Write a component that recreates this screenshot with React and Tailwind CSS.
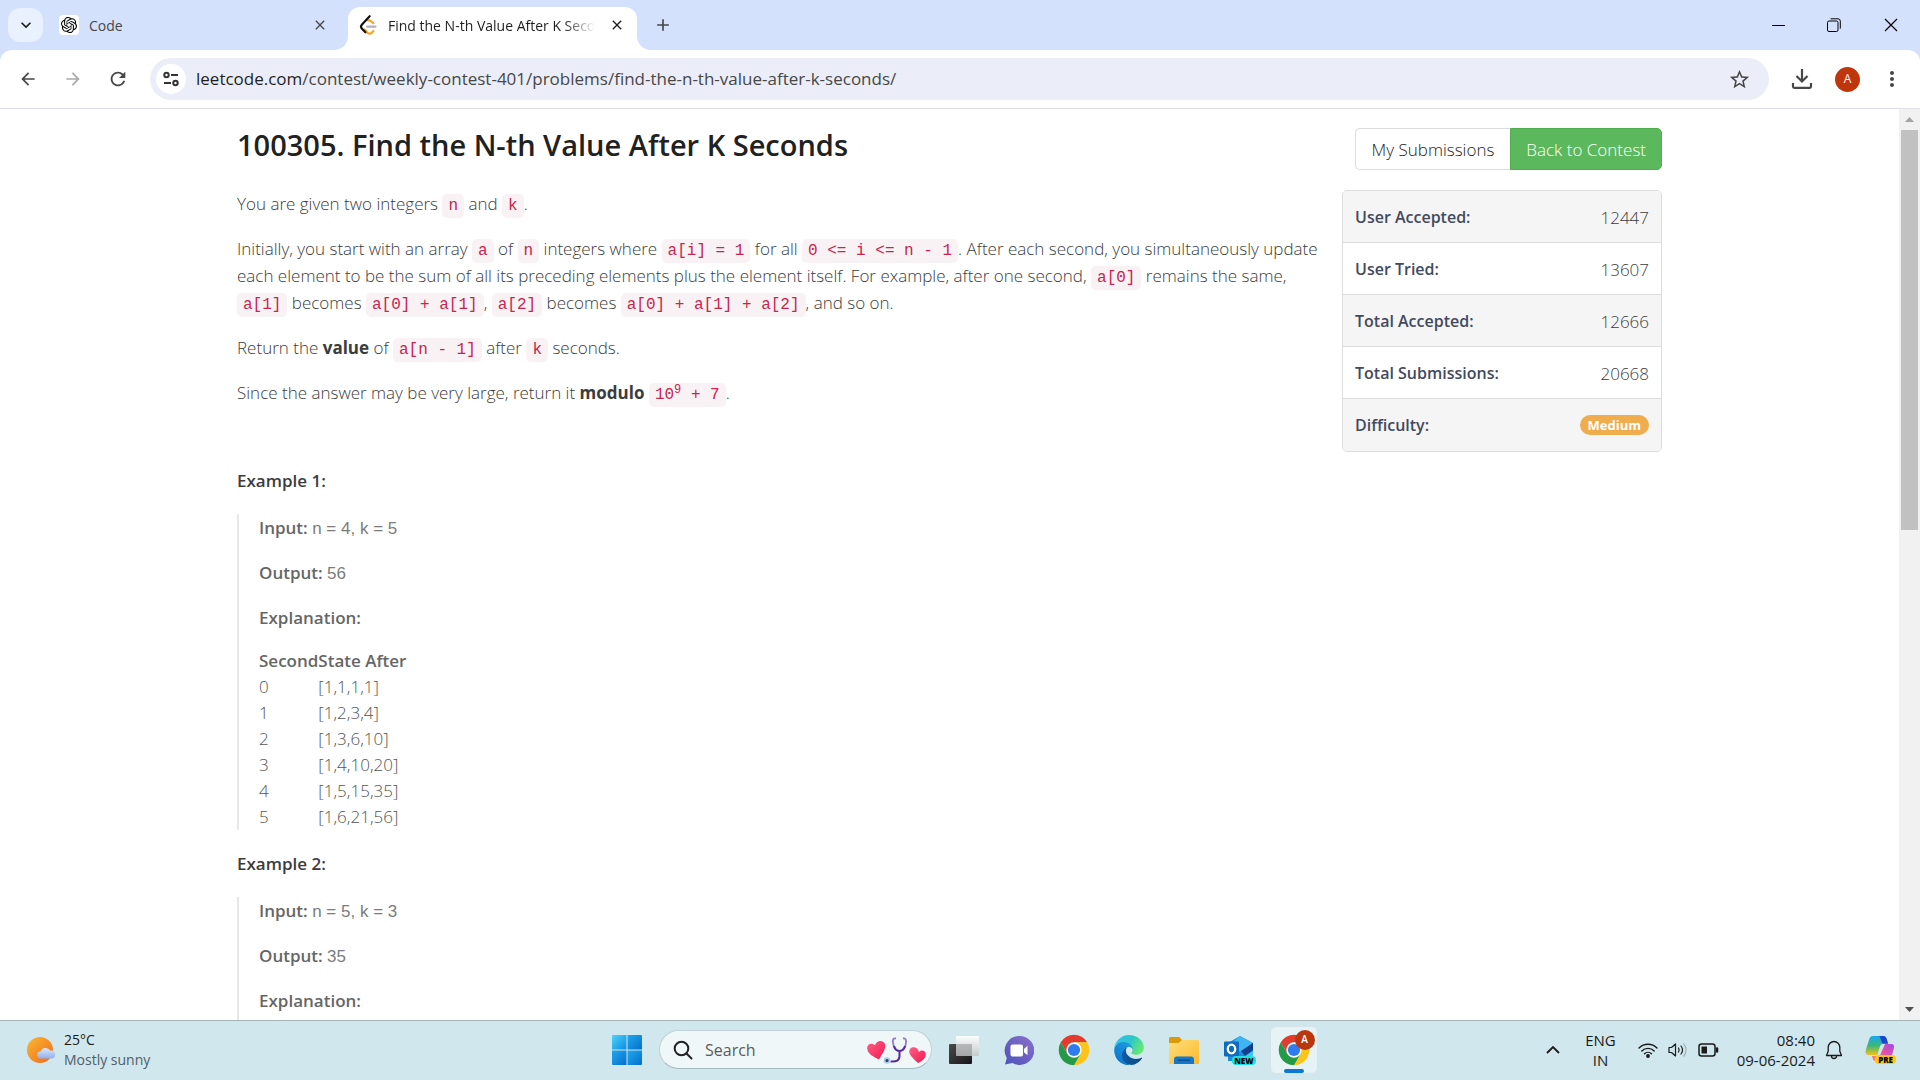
import React from "react";
import {
  MdArrowBack,
  MdArrowForward,
  MdRefresh,
  MdStarBorder,
  MdMoreVert,
  MdClose,
  MdAdd,
  MdKeyboardArrowDown,
} from "react-icons/md";
import { SiOpenai } from "react-icons/si";

/* ---------- icons ---------- */

function LeetCodeIcon() {
  return (
    <svg className="size-5 shrink-0" viewBox="0 0 24 24" fill="none" strokeLinecap="round" strokeWidth="2.6">
      <path d="M8 17.5l3.4 3.8a3.6 3.6 0 0 0 5.1 0l2-2.1" stroke="#ffa116" />
      <path d="M12 6.500l2.200-.2 4.200 3.600" stroke="#ffa116" />
      <path d="M14 1.500L4.800 11.300a3.800 3.800 0 0 0 0 5.200l4 4.200" stroke="#111" />
      <path d="M11 14h10" stroke="#b3b3b3" />
    </svg>
  );
}

function TuneIcon() {
  return (
    <svg width="18" height="18" viewBox="0 0 18 18" fill="none" stroke="#333" strokeWidth="2">
      <circle cx="4.500" cy="5" r="2.200" />
      <path d="M9 5h7M2 13h7" />
      <circle cx="13.500" cy="13" r="2.200" />
    </svg>
  );
}

function DownloadIcon() {
  return (
    <svg width="22" height="22" viewBox="0 0 22 22" fill="none" stroke="#474747" strokeWidth="2.200">
      <path d="M11 1v12M5.500 8l5.500 5.500L16.500 8M2 15v3.500c0 .8.500 1.300 1.300 1.300h15.400c.8 0 1.300-.5 1.300-1.300V15" />
    </svg>
  );
}

function WindowsIcon() {
  return (
    <svg width="30" height="30" viewBox="0 0 30 30">
      <defs>
        <linearGradient id="win" x1="0" y1="0" x2="1" y2="1" gradientUnits="objectBoundingBox">
          <stop offset="0" stopColor="#4fd3fb" />
          <stop offset="1" stopColor="#0d8be0" />
        </linearGradient>
        <linearGradient id="win2" x1="0" y1="0" x2="1" y2="1">
          <stop offset="0" stopColor="#22a7ee" />
          <stop offset="1" stopColor="#0470cc" />
        </linearGradient>
      </defs>
      <path d="M1 0h13.500v14.500H0V1a1 1 0 0 1 1-1z" fill="url(#win)" />
      <path d="M15.500 0H29a1 1 0 0 1 1 1v13.500H15.500z" fill="url(#win2)" />
      <path d="M0 15.500h14.500V30H1a1 1 0 0 1-1-1z" fill="url(#win2)" />
      <path d="M15.500 15.500H30V29a1 1 0 0 1-1 1H15.500z" fill="url(#win2)" />
    </svg>
  );
}

function StethoscopeIcon() {
  return (
    <svg width="60" height="28" viewBox="0 0 60 28" fill="none">
      <defs>
        <linearGradient id="heart" x1="0" y1="0" x2="1" y2="1">
          <stop offset="0" stopColor="#ff5f86" />
          <stop offset="1" stopColor="#f01a52" />
        </linearGradient>
      </defs>
      <path
        d="M13 23.500C8 21 1.500 18 1.200 12.500.9 8.300 5.500 6 9 9.300 10.500 4.500 16 3.500 18.500 7c2.800 4.500-2.500 11-5.500 16.500z"
        fill="url(#heart)"
      />
      <path
        d="M52 27c4-2 8-4.500 7.800-9-.2-3.200-4-4.800-6.800-2-1.200-4.300-5.600-6.200-8.800-3.200-3.500 4.200 2.800 9.700 7.800 14.200z"
        fill="url(#heart)"
      />
      <path d="M30 2.500c-3-.5-3.500 1-3 4 .5 5 2 8.500 6.500 8.500s6-3.500 6.500-8.500c.3-3-.5-4.500-3-4" stroke="#8d7bc4" strokeWidth="1.800" />
      <path d="M28 10c1 3.500 2.500 5 5.500 5s4.500-1.500 5.500-5M33.500 15v5c0 4.500-3 6-9 5.500" stroke="#5a2aa0" strokeWidth="2" />
      <circle cx="21" cy="24.500" r="3.300" fill="#a9c8ea" />
      <circle cx="21" cy="24.500" r="1.500" fill="#33415c" />
    </svg>
  );
}

function TaskViewIcon() {
  return (
    <svg width="32" height="32" viewBox="0 0 32 32">
      <defs>
        <linearGradient id="tvDark" x1="0" y1="0" x2="1" y2="1">
          <stop offset="0" stopColor="#4b4b4b" />
          <stop offset="1" stopColor="#161616" />
        </linearGradient>
        <linearGradient id="tvLight" x1="0" y1="0" x2="0" y2="1">
          <stop offset="0" stopColor="#ffffff" />
          <stop offset="1" stopColor="#c4c8c9" />
        </linearGradient>
      </defs>
      <rect x="1" y="10" width="23" height="20" rx="1" fill="url(#tvDark)" />
      <rect x="8" y="2" width="23" height="20" rx="1" fill="url(#tvLight)" opacity=".92" />
      <path d="M8 10h16v12H8z" fill="#8d8d8d" opacity=".45" />
    </svg>
  );
}

function ChatIcon() {
  return (
    <svg width="30" height="30" viewBox="0 0 30 30">
      <defs>
        <linearGradient id="chat" x1="1" y1="0" x2="0" y2="1">
          <stop offset="0" stopColor="#8d70c9" />
          <stop offset="1" stopColor="#4b53bc" />
        </linearGradient>
      </defs>
      <path d="M15 1a14.500 14.500 0 1 1-6.500 27L1 29.500l1.800-6.500A14.500 14.500 0 0 1 15 1z" fill="url(#chat)" />
      <rect x="6.500" y="9.500" width="12.500" height="12" rx="2" fill="#fff" />
      <path d="M20 14l3.500-3.200v9.500L20 17.200z" fill="#fff" />
    </svg>
  );
}

function ChromeIcon() {
  return (
    <svg width="32" height="32" viewBox="1 1 46 46">
      <path d="M4.950 13A22 22 0 0 1 43.050 13H24v11l-9.530 5.500z" fill="#e33b2e" />
      <path d="M43.050 13A22 22 0 0 1 24 46l9.530-16.500L24 24V13z" fill="#fcc419" />
      <path d="M24 46A22 22 0 0 1 4.950 13l9.520 16.500L24 24l9.530 5.500z" fill="#249a48" />
      <circle cx="24" cy="24" r="11" fill="#fff" />
      <circle cx="24" cy="24" r="8.800" fill="#2f7cf0" />
    </svg>
  );
}

function EdgeIcon() {
  return (
    <svg width="30" height="30" viewBox="0 0 256 259">
      <defs>
        <linearGradient id="edgeA" x1="0" y1="0" x2="1" y2="0">
          <stop offset="0" stopColor="#0b5aa8" />
          <stop offset="1" stopColor="#0c4a80" />
        </linearGradient>
        <linearGradient id="edgeB" x1=".8" y1="0" x2=".2" y2="1">
          <stop offset="0" stopColor="#1b9de2" />
          <stop offset="1" stopColor="#0b72cc" />
        </linearGradient>
        <linearGradient id="edgeC" x1="0" y1=".2" x2="1" y2=".6">
          <stop offset="0" stopColor="#35c1f1" />
          <stop offset=".5" stopColor="#2cc5c9" />
          <stop offset="1" stopColor="#66eb6e" />
        </linearGradient>
      </defs>
      <path
        fill="url(#edgeA)"
        d="M235.680 195.460a93.730 93.730 0 0 1-10.540 4.710 101.870 101.870 0 0 1-35.900 6.460c-47.320 0-88.540-32.550-88.540-74.320A31.480 31.480 0 0 1 117.130 105c-42.800 1.800-53.800 46.400-53.800 72.530 0 73.880 68.090 81.370 82.760 81.370 7.910 0 19.840-2.300 27-4.560l1.310-.44a128.340 128.340 0 0 0 66.600-52.800 4 4 0 0 0-5.320-5.640z"
      />
      <path
        fill="url(#edgeB)"
        d="M105.730 246.420A79.200 79.200 0 0 1 83 225.080a80.720 80.720 0 0 1 29.460-120c3.120-1.470 8.450-4.130 15.540-4a32.350 32.350 0 0 1 25.690 13 31.880 31.880 0 0 1 6.360 18.660c0-.21 24.460-79.600-80-79.600-43.900 0-80 41.660-80 78.210a130.150 130.150 0 0 0 12.110 56 128 128 0 0 0 156.380 67.110 75.550 75.550 0 0 1-62.780-8z"
      />
      <path
        fill="url(#edgeC)"
        d="M152.330 148.860c-.81 1.050-3.300 2.500-3.300 5.660 0 2.610 1.700 5.120 4.720 7.230 14.380 10 41.490 8.680 41.560 8.680a59.560 59.560 0 0 0 30.270-8.350A61.380 61.380 0 0 0 256 109.200c.26-22.410-8-37.310-11.340-43.910C223.460 23.840 177.720 0 128 0A128 128 0 0 0 0 126.200c.48-36.540 36.800-66.050 80-66.050 3.500 0 23.460.34 42 10.070 16.340 8.580 24.900 18.940 30.850 29.210 6.180 10.670 7.280 24.150 7.280 29.520s-2.740 13.330-7.800 19.910z"
      />
    </svg>
  );
}

function FolderIcon() {
  return (
    <svg width="32" height="30" viewBox="0 0 32 30">
      <defs>
        <linearGradient id="folder" x1="0" y1="0" x2="1" y2="1">
          <stop offset="0" stopColor="#ffdf7c" />
          <stop offset="1" stopColor="#fbb92a" />
        </linearGradient>
      </defs>
      <path d="M1 3.500C1 2.500 1.700 2 2.500 2h8.700l3.300 3.500L11 9H1z" fill="#dc9a0b" />
      <path d="M1 8h9.500l3.500-3h15.500c1 0 1.500.6 1.500 1.500V28c0 .6-.4 1-1 1H2c-.6 0-1-.4-1-1z" fill="url(#folder)" />
      <path d="M6 29v-4.500c0-2 1-3 3-3h14c2 0 3 1 3 3V29z" fill="#1577c9" />
      <path d="M10 25.300h12" stroke="#0b4f94" strokeWidth="1.500" />
    </svg>
  );
}

function OutlookIcon() {
  return (
    <svg width="32" height="32" viewBox="0 0 32 32">
      <path d="M5 9L17 2l13 7v18H5z" fill="#1c8de0" />
      <path d="M17 2l13 7-13 9L9 9z" fill="#3fb4f3" />
      <path d="M18 17L30 9v7l-8 6z" fill="#123f8c" />
      <path d="M12 29l18-12v12z" fill="#42c4f5" />
      <rect x="1" y="7.500" width="15" height="15" rx="1" fill="#0f6cbd" />
      <ellipse cx="8.500" cy="15" rx="3.700" ry="4.300" fill="none" stroke="#fff" strokeWidth="2.300" />
    </svg>
  );
}

function WeatherIcon() {
  return (
    <svg width="30" height="28" viewBox="0 0 30 28">
      <defs>
        <linearGradient id="sun" x1="0" y1="0" x2="1" y2="1">
          <stop offset="0" stopColor="#f9b92f" />
          <stop offset="1" stopColor="#f0681d" />
        </linearGradient>
        <linearGradient id="cloud" x1="0" y1="0" x2="0" y2="1">
          <stop offset="0" stopColor="#dbe7fb" />
          <stop offset="1" stopColor="#8fb0ee" />
        </linearGradient>
      </defs>
      <circle cx="14" cy="14" r="13" fill="url(#sun)" />
      <path d="M15 22.500a3.500 3.500 0 0 1-.5-7 5.500 5.500 0 0 1 9.800-1 4 4 0 0 1 1.500 8z" fill="url(#cloud)" />
    </svg>
  );
}

function WifiIcon() {
  return (
    <svg width="20" height="16" viewBox="0 0 20 16" fill="none" stroke="#1b1b1b" strokeWidth="1.400" strokeLinecap="round">
      <path d="M1 6a12.800 12.800 0 0 1 18 0M3.800 9a8.700 8.700 0 0 1 12.400 0M6.500 11.800a5 5 0 0 1 7 0" />
      <circle cx="10" cy="14" r="1.200" fill="#1b1b1b" />
    </svg>
  );
}

function SpeakerIcon() {
  return (
    <svg width="20" height="16" viewBox="0 0 20 16" fill="none" stroke="#1b1b1b" strokeWidth="1.200" strokeLinecap="round" strokeLinejoin="round">
      <path d="M1 5.500h2.500L7.500 2v12l-4-3.500H1z" />
      <path d="M10.500 6a3.500 3.500 0 0 1 0 4M13 4a6.500 6.500 0 0 1 0 8" />
      <path d="M15.700 1.800a9.500 9.500 0 0 1 0 12.400" stroke="#9fb2b7" />
    </svg>
  );
}

function BatteryIcon() {
  return (
    <svg width="21" height="14" viewBox="0 0 21 14" fill="none" stroke="#1b1b1b" strokeWidth="1.500">
      <rect x="1" y="1" width="16" height="12" rx="2.500" />
      <path d="M19 5.500v3" strokeWidth="2.500" strokeLinecap="round" />
      <path d="M3.500 3.500H9v7H3.500z" fill="#1b1b1b" stroke="none" />
    </svg>
  );
}

function BellIcon() {
  return (
    <svg width="18" height="20" viewBox="0 0 18 20" fill="none" stroke="#1b1b1b" strokeWidth="1.300" strokeLinejoin="round">
      <path d="M9 1.500a5.800 5.800 0 0 0-5.800 5.800v4L1.500 15.500h15l-1.700-4.200v-4A5.800 5.800 0 0 0 9 1.500z" />
      <path d="M6.500 16a2.500 2.500 0 0 0 5 0" />
    </svg>
  );
}

function CopilotIcon() {
  return (
    <svg width="30" height="28" viewBox="0 0 30 28">
      <defs>
        <linearGradient id="copA" x1="0" y1="0" x2="0" y2="1">
          <stop offset="0" stopColor="#1aa8f0" />
          <stop offset=".5" stopColor="#38b87c" />
          <stop offset="1" stopColor="#f2c21a" />
        </linearGradient>
        <linearGradient id="copB" x1="0" y1="1" x2="1" y2="0">
          <stop offset="0" stopColor="#ff8a5c" />
          <stop offset=".5" stopColor="#ef4f9d" />
          <stop offset="1" stopColor="#9b4df0" />
        </linearGradient>
      </defs>
      <path d="M8 0h10c2.500 0 3.200 1.500 4 4l1.200 4h-5c-2 0-2.700 1-3.400 3l-2.500 8H4c-3 0-4-2-3.200-5L4 4c.7-2.500 1.700-4 4-4z" fill="url(#copA)" />
      <path d="M14 0h4c2.500 0 3.200 1.500 4 4l1 3.500h-5C16 7 16 1 14 0z" fill="#1f45cf" />
      <path d="M20 8h6c3 0 3.500 2 2.700 5l-2 7c-.9 3.500-2 5-5 5H11c-2.500 0-3.500-2-4-5h6c1.500 0 2.500-1 3-3z" fill="url(#copB)" />
    </svg>
  );
}

/* ---------- browser frame ---------- */

function TabStrip() {
  return (
    <div className="flex h-[50px] items-stretch bg-[#d3e1fd] text-[14px] text-[#474747]">
      <button aria-label="Search tabs" className="my-2 ml-2 grid w-[35px] place-items-center rounded-xl bg-[#e9f0fe]">
        <MdKeyboardArrowDown className="size-5 text-[#1b1b1b]" />
      </button>
      <div className="ml-4 flex w-[275px] items-center pr-1">
        <span className="grid size-5 place-items-center rounded-sm bg-white">
          <SiOpenai className="size-4 text-black" />
        </span>
        <span className="ml-[10px] flex-1">Code</span>
        <button aria-label="Close tab" className="grid size-5 place-items-center">
          <MdClose className="size-4" />
        </button>
      </div>
      <div className="flex w-[317px]">
        <div className="w-[14px] self-end bg-white">
          <div className="h-[14px] rounded-br-[14px] bg-[#d3e1fd]" />
        </div>
        <div className="mt-[7px] flex flex-1 items-center rounded-t-xl bg-white pr-[10px] pl-[10px] pb-[7px] text-[#1f1f1f]">
          <LeetCodeIcon />
          <span className="ml-[10px] w-0 flex-1 overflow-hidden whitespace-nowrap [mask-image:linear-gradient(to_right,black_85%,transparent)]">
            Find the N-th Value After K Seconds
          </span>
          <button aria-label="Close tab" className="ml-3 grid size-5 place-items-center">
            <MdClose className="size-4" />
          </button>
        </div>
        <div className="w-[14px] self-end bg-white">
          <div className="h-[14px] rounded-bl-[14px] bg-[#d3e1fd]" />
        </div>
      </div>
      <button aria-label="New tab" className="grid w-6 place-items-center">
        <MdAdd className="size-5" />
      </button>
      <div className="ml-auto flex text-black">
        <button aria-label="Minimize" className="grid w-14 place-items-center">
          <svg width="13" height="13" viewBox="0 0 13 13" stroke="currentColor"><path d="M0 6.500h13" /></svg>
        </button>
        <button aria-label="Restore" className="grid w-14 place-items-center">
          <svg width="14" height="14" viewBox="0 0 14 14" fill="none" stroke="currentColor">
            <rect x=".5" y="3" width="10.500" height="10.500" rx="1.500" />
            <path d="M3.500 .8h7.500a2.300 2.300 0 0 1 2.300 2.300v7.500" />
          </svg>
        </button>
        <button aria-label="Close" className="grid w-[58px] place-items-center">
          <svg width="14" height="14" viewBox="0 0 14 14" stroke="currentColor" strokeWidth="1.200"><path d="M1 1l12 12M13 1L1 13" /></svg>
        </button>
      </div>
    </div>
  );
}

function Toolbar() {
  return (
    <div className="bg-[#d3e1fd]">
      <div className="flex h-[59px] items-center rounded-t-xl border-b border-[#dfe1e5] bg-white pl-[5px] text-[#474747]">
        <button aria-label="Back" className="grid w-[45px] place-items-center"><MdArrowBack className="size-5" /></button>
        <button aria-label="Forward" className="grid w-[45px] place-items-center text-[#a9a9a9]"><MdArrowForward className="size-5" /></button>
        <button aria-label="Reload" className="grid w-[45px] place-items-center"><MdRefresh className="size-[22px]" /></button>
        <div className="ml-[10px] flex h-[42px] flex-1 items-center rounded-full bg-[#ebeef8] pr-[18px] pl-[6px]">
          <button aria-label="Site information" className="grid size-[30px] place-items-center rounded-full bg-white"><TuneIcon /></button>
          <div className="ml-[10px] flex-1 text-[17px] text-[#474747]">
            <span className="text-[#1f1f1f]">leetcode.com</span>/contest/weekly-contest-401/problems/find-the-n-th-value-after-k-seconds/
          </div>
          <button aria-label="Bookmark"><MdStarBorder className="size-[23px]" /></button>
        </div>
        <button aria-label="Downloads" className="ml-[22px]"><DownloadIcon /></button>
        <button aria-label="Profile" className="ml-[22px] grid size-[25px] place-items-center rounded-full bg-[#bf360c] text-[12px] text-white">A</button>
        <button aria-label="Menu" className="mr-4 ml-5"><MdMoreVert className="size-6" /></button>
      </div>
    </div>
  );
}

/* ---------- page ---------- */

function Code({ children }) {
  return (
    <code className="rounded-[5px] bg-[#f9f2f4] px-[6px] py-[3px] font-['Liberation_Mono',monospace] text-[16px] leading-4 font-normal whitespace-nowrap text-[#c7254e]">
      {children}
    </code>
  );
}

function Example({ title, input, output, rows }) {
  return (
    <section>
      <p className="mb-5 font-semibold">{title}</p>
      <blockquote className="border-l-2 border-[#e8e8e8] pl-5 text-[#666]">
        <p className="mb-[18px]"><strong className="font-semibold">Input:</strong> <span className="font-['Liberation_Sans',sans-serif] leading-4 text-[#7c7c7c]">{input}</span></p>
        <p className="mb-[18px]"><strong className="font-semibold">Output:</strong> <span className="font-['Liberation_Sans',sans-serif] leading-4 text-[#7c7c7c]">{output}</span></p>
        <p className="mb-4 font-semibold">Explanation:</p>
        <table className="text-left leading-[26px] text-[#555]">
          <thead className="leading-[27px] text-[#666]">
            <tr>
              <th className="p-0 font-semibold">Second</th>
              <th className="p-0 font-semibold">State After</th>
            </tr>
          </thead>
          <tbody>
            {rows.map((state, i) => (
              <tr key={i}>
                <td className="p-0">{i}</td>
                <td className="p-0">{state}</td>
              </tr>
            ))}
          </tbody>
        </table>
      </blockquote>
    </section>
  );
}

const STATS = [
  ["User Accepted:", "12447"],
  ["User Tried:", "13607"],
  ["Total Accepted:", "12666"],
  ["Total Submissions:", "20668"],
];

function Sidebar() {
  return (
    <aside className="w-[320px] shrink-0 pt-[19px]">
      <div className="mb-5 flex justify-end">
        <a href="#submissions" className="flex h-[42px] items-center rounded-l-[5px] border border-r-0 border-[#ddd] px-4 pt-px text-[#222]">My Submissions</a>
        <a href="#contest" className="flex h-[42px] items-center rounded-r-[5px] border border-[#4cae4c] bg-[#5cb85c] px-[15px] pt-px text-white">Back to Contest</a>
      </div>
      <dl className="divide-y divide-[#ddd] overflow-hidden rounded-[5px] border border-[#ddd]">
        {STATS.map(([label, value]) => (
          <div key={label} className="flex h-[52px] items-center justify-between px-3 pt-px odd:bg-[#f5f5f5]">
            <dt className="text-[16px] font-semibold text-[#424a5e]">{label}</dt>
            <dd>{value}</dd>
          </div>
        ))}
        <div className="flex h-[52px] items-center justify-between bg-[#f5f5f5] px-3">
          <dt className="text-[16px] font-semibold text-[#424a5e]">Difficulty:</dt>
          <dd className="rounded-full bg-[#f0ad4e] px-2 text-[13px] leading-5 font-bold text-white">Medium</dd>
        </div>
      </dl>
    </aside>
  );
}

function Problem() {
  return (
    <main className="flex min-h-0 flex-1">
      <div className="min-w-0 flex-1 overflow-hidden bg-white">
        <div className="mx-auto flex max-w-[1425px] gap-2 text-[17px] leading-[27px] font-light text-[#3c3c3c]">
          <article className="min-w-0 flex-1 pt-4">
            <h1 className="mb-[25px] text-[29px] leading-10 font-semibold text-[#212121]">100305. Find the N-th Value After K Seconds</h1>
            <div className="flex flex-col gap-[18px]">
              <p>You are given two integers <Code>n</Code> and <Code>k</Code>.</p>
              <p>
                Initially, you start with an array <Code>a</Code> of <Code>n</Code> integers where <Code>a[i] = 1</Code> for all{" "}
                <Code>0 &lt;= i &lt;= n - 1</Code>. After each second, you simultaneously update each element to be the sum of all its
                preceding elements plus the element itself. For example, after one second, <Code>a[0]</Code> remains the same,{" "}
                <Code>a[1]</Code> becomes <Code>a[0] + a[1]</Code>, <Code>a[2]</Code> becomes <Code>a[0] + a[1] + a[2]</Code>, and so on.
              </p>
              <p>Return the <strong className="font-bold">value</strong> of <Code>a[n - 1]</Code> after <Code>k</Code> seconds.</p>
              <p>
                Since the answer may be very large, return it <strong className="font-bold">modulo</strong>{" "}
                <Code>10<sup className="text-[12px]">9</sup> + 7</Code>.
              </p>
            </div>
            <div className="mt-[61px] flex flex-col gap-5">
              <Example
                title="Example 1:"
                input="n = 4, k = 5"
                output="56"
                rows={["[1,1,1,1]", "[1,2,3,4]", "[1,3,6,10]", "[1,4,10,20]", "[1,5,15,35]", "[1,6,21,56]"]}
              />
              <Example
                title="Example 2:"
                input="n = 5, k = 3"
                output="35"
                rows={["[1,1,1,1,1]", "[1,2,3,4,5]", "[1,3,6,10,15]", "[1,4,10,20,35]"]}
              />
            </div>
          </article>
          <Sidebar />
        </div>
      </div>
      <div className="flex w-[21px] flex-col items-center bg-[#f1f1f1]">
        <div className="grid h-[21px] place-items-center">
          <svg width="9" height="5" viewBox="0 0 9 5"><path d="M0 5l4.500-5L9 5z" fill="#a3a3a3" /></svg>
        </div>
        <div className="h-[400px] w-[17px] bg-[#c1c1c1]" />
        <div className="mt-auto grid h-[21px] place-items-center">
          <svg width="9" height="5" viewBox="0 0 9 5"><path d="M0 0l4.500 5L9 0z" fill="#505050" /></svg>
        </div>
      </div>
    </main>
  );
}

/* ---------- taskbar ---------- */

function AppButton({ label, children }) {
  return (
    <button aria-label={label} className="grid h-12 w-[55px] place-items-center">
      {children}
    </button>
  );
}

function Taskbar() {
  return (
    <footer className="grid h-[60px] shrink-0 grid-cols-[1fr_auto_1fr] items-center border-t border-[#a5b4b9] bg-[#cfe7ed] pb-0.5 text-[14px] text-[#1b1b1b]">
      <button className="flex items-center gap-2 pl-[26px] text-left leading-5">
        <WeatherIcon />
        <span>
          25°C
          <br />
          <span className="text-[#50606a]">Mostly sunny</span>
        </span>
      </button>
      <div className="flex items-center">
        <AppButton label="Start"><WindowsIcon /></AppButton>
        <label className="mr-1 ml-[5px] flex h-[39px] w-[273px] items-center rounded-full border border-[#bfd3d9] border-b-[#a3b9c0] bg-[#f0f7f9] pr-[5px] pl-[13px]">
          <svg width="20" height="20" viewBox="0 0 20 20" fill="none" stroke="#222" strokeWidth="2" strokeLinecap="round">
            <circle cx="8.500" cy="8.500" r="6.800" />
            <path d="M13.500 13.500l5 5" />
          </svg>
          <input type="text" aria-label="Search" placeholder="Search" className="ml-3 w-0 flex-1 bg-transparent text-[16px] outline-none placeholder:text-[#5c5c5c]" />
          <StethoscopeIcon />
        </label>
        <AppButton label="Task view"><TaskViewIcon /></AppButton>
        <AppButton label="Chat"><ChatIcon /></AppButton>
        <AppButton label="Chrome"><ChromeIcon /></AppButton>
        <AppButton label="Edge"><EdgeIcon /></AppButton>
        <AppButton label="File Explorer"><FolderIcon /></AppButton>
        <AppButton label="Outlook">
          <span className="relative">
            <OutlookIcon />
            <span className="absolute -right-px bottom-px rounded-sm bg-[#1fe0e0] px-[2px] text-[8px] leading-[9px] font-extrabold text-black">NEW</span>
          </span>
        </AppButton>
        <AppButton label="Chrome, Find the N-th Value After K Seconds">
          <span className="relative grid h-12 w-12 place-items-center rounded-md border border-[#d5e4e8] bg-[#e6f3f6]">
            <ChromeIcon />
            <span className="absolute top-[3px] right-[2px] grid size-5 place-items-center rounded-full bg-[#b9370f] text-[10px] font-semibold text-white">A</span>
            <span className="absolute bottom-0 h-1 w-5 rounded-full bg-[#0a78d4]" />
          </span>
        </AppButton>
      </div>
      <div className="flex items-center justify-end pr-[25px] text-[15px] leading-5">
        <button aria-label="Show hidden icons" className="mr-[25px]">
          <svg width="14" height="8" viewBox="0 0 14 8" fill="none" stroke="currentColor" strokeWidth="1.800"><path d="M1 7l6-6 6 6" /></svg>
        </button>
        <button className="mr-[22px] text-center">ENG<br />IN</button>
        <button aria-label="Network, volume, battery" className="mr-[18px] flex items-center gap-[10px]">
          <WifiIcon />
          <SpeakerIcon />
          <BatteryIcon />
        </button>
        <button className="mr-[10px] text-right">08:40<br />09-06-2024</button>
        <button aria-label="Notifications" className="mr-[22px]"><BellIcon /></button>
        <button aria-label="Copilot" className="relative">
          <CopilotIcon />
          <span className="absolute -right-px bottom-0 rounded-sm bg-[#ffc814] px-[3px] text-[8px] leading-[9px] font-extrabold text-black">PRE</span>
        </button>
      </div>
    </footer>
  );
}

export default function App() {
  return (
    <div className="flex h-screen flex-col overflow-hidden bg-white font-['Open_Sans','Noto_Sans',sans-serif]">
      <TabStrip />
      <Toolbar />
      <Problem />
      <Taskbar />
    </div>
  );
}
